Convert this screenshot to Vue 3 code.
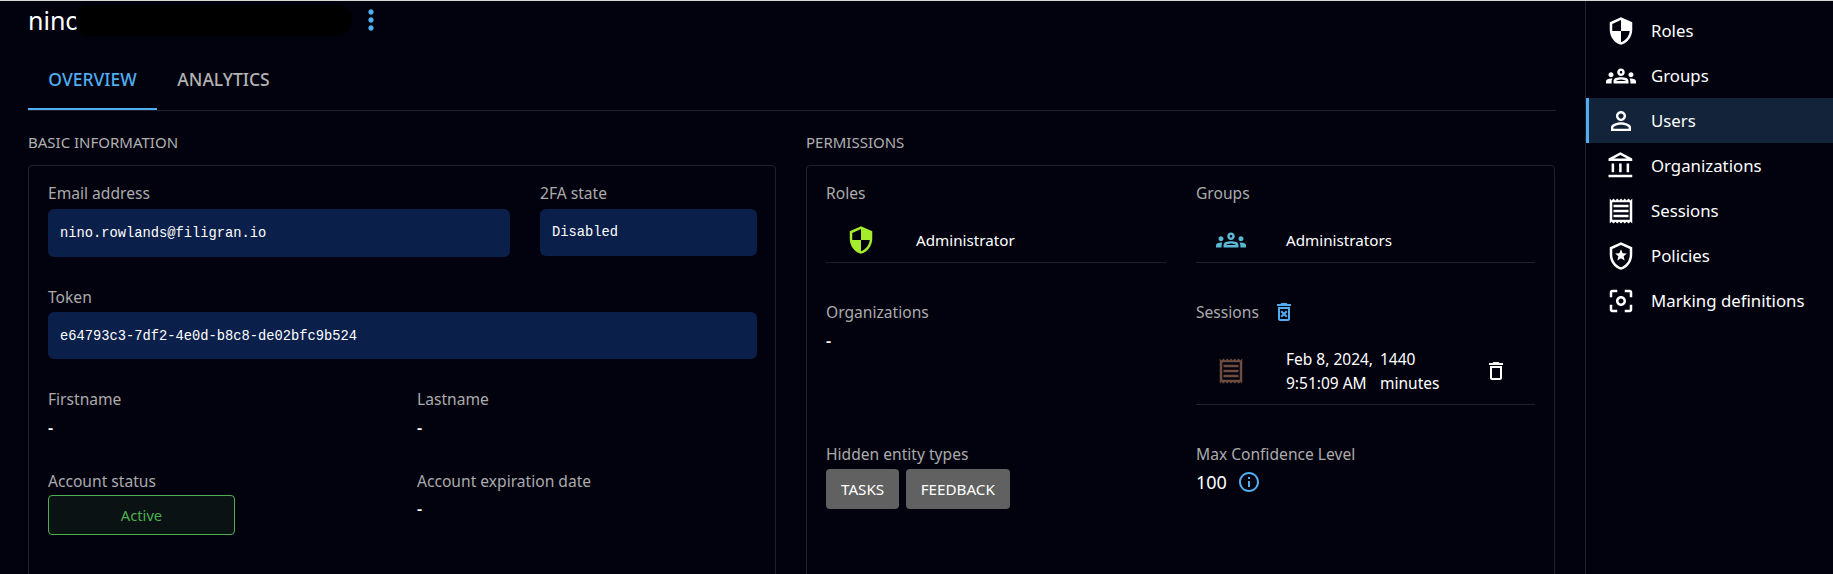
<template>
  <div class="page">
    <main class="main">
      <header class="title-row">
        <h1 class="title">nino.rowlands@filigran.io</h1>
        <div class="redaction"></div>
        <svg class="kebab" viewBox="0 0 24 24"><path :d="icons.more" /></svg>
      </header>

      <nav class="tabs">
        <span class="tab active">Overview</span>
        <span class="tab">Analytics</span>
      </nav>

      <div class="columns">
        <!-- Basic information -->
        <section class="column">
          <h2 class="section-title">Basic information</h2>
          <div class="card">
            <div class="basic-top">
              <div class="field">
                <div class="label">Email address</div>
                <pre class="code code-email">nino.rowlands@filigran.io</pre>
              </div>
              <div class="field">
                <div class="label">2FA state</div>
                <pre class="code code-state">Disabled</pre>
              </div>
            </div>
            <div class="field token">
              <div class="label">Token</div>
              <pre class="code code-token">e64793c3-7df2-4e0d-b8c8-de02bfc9b524</pre>
            </div>
            <div class="pair names">
              <div>
                <div class="label">Firstname</div>
                <div class="value">-</div>
              </div>
              <div>
                <div class="label">Lastname</div>
                <div class="value">-</div>
              </div>
            </div>
            <div class="pair status">
              <div>
                <div class="label">Account status</div>
                <div class="status-tag">Active</div>
              </div>
              <div>
                <div class="label">Account expiration date</div>
                <div class="value expiry">-</div>
              </div>
            </div>
          </div>
        </section>

        <!-- Permissions -->
        <section class="column">
          <h2 class="section-title">Permissions</h2>
          <div class="card">
            <div class="perm-grid">
              <div>
                <div class="label">Roles</div>
                <div class="list-row">
                  <span class="list-icon"><svg class="icon large lime" viewBox="0 0 24 24"><path :d="icons.security" /></svg></span>
                  <span class="list-text">Administrator</span>
                </div>
              </div>
              <div>
                <div class="label">Groups</div>
                <div class="list-row">
                  <span class="list-icon"><svg class="icon large teal" viewBox="0 0 24 24"><path :d="icons.groups" /></svg></span>
                  <span class="list-text">Administrators</span>
                </div>
              </div>
              <div class="perm-mid">
                <div class="label">Organizations</div>
                <div class="value">-</div>
              </div>
              <div class="perm-mid">
                <div class="label label-with-icon">
                  Sessions
                  <svg class="icon blue" viewBox="0 0 24 24"><path :d="icons.deleteForever" /></svg>
                </div>
                <div class="list-row session-row">
                  <span class="list-icon"><svg class="icon large brown" viewBox="0 0 24 24"><path :d="icons.receipt" /></svg></span>
                  <span class="session-date">Feb 8, 2024,<br />9:51:09 AM</span>
                  <span class="session-time">1440<br />minutes</span>
                  <svg class="icon session-delete" viewBox="0 0 24 24"><path :d="icons.trash" /></svg>
                </div>
              </div>
              <div class="perm-bottom">
                <div class="label">Hidden entity types</div>
                <div class="chips">
                  <span class="chip">TASKS</span>
                  <span class="chip">FEEDBACK</span>
                </div>
              </div>
              <div class="perm-bottom">
                <div class="label">Max Confidence Level</div>
                <div class="confidence">
                  <span>100</span>
                  <svg class="icon blue" viewBox="0 0 24 24"><path :d="icons.info" /></svg>
                </div>
              </div>
            </div>
          </div>
        </section>
      </div>
    </main>

    <aside class="sidebar">
      <a v-for="item in menu" :key="item.label" class="menu-item" :class="{ selected: item.selected }">
        <svg class="icon large menu-icon" viewBox="0 0 24 24"><path :d="item.icon" /></svg>
        <span>{{ item.label }}</span>
      </a>
    </aside>
  </div>
</template>

<script setup>
const icons = {
  more: 'M12 8c1.1 0 2-.9 2-2s-.9-2-2-2-2 .9-2 2 .9 2 2 2zm0 2c-1.1 0-2 .9-2 2s.9 2 2 2 2-.9 2-2-.9-2-2-2zm0 6c-1.1 0-2 .9-2 2s.9 2 2 2 2-.9 2-2-.9-2-2-2z',
  security: 'M12 1 3 5v6c0 5.55 3.84 10.74 9 12 5.16-1.26 9-6.45 9-12V5l-9-4zm0 10.99h7c-.53 4.12-3.28 7.79-7 8.94V12H5V6.3l7-3.11v8.8z',
  groups: 'M4 13c1.1 0 2-.9 2-2s-.9-2-2-2-2 .9-2 2 .9 2 2 2zm1.13 1.1c-.37-.06-.74-.1-1.13-.1-.99 0-1.93.21-2.78.58C.48 14.9 0 15.62 0 16.43V18h4.5v-1.61c0-.83.23-1.61.63-2.29zM20 13c1.1 0 2-.9 2-2s-.9-2-2-2-2 .9-2 2 .9 2 2 2zm4 3.43c0-.81-.48-1.53-1.22-1.85-.85-.37-1.79-.58-2.78-.58-.39 0-.76.04-1.13.1.4.68.63 1.46.63 2.29V18H24v-1.57zm-7.76-2.78C15.07 13.14 13.62 13 12 13c-1.62 0-3.07.15-4.24.65C6.68 14.13 6 15.21 6 16.39V18h12v-1.61c0-1.18-.68-2.26-1.76-2.74zM8.07 16c.09-.23.13-.39.91-.69.97-.38 1.99-.56 3.02-.56s2.05.18 3.02.56c.77.3.81.46.91.69H8.07zM12 8c.55 0 1 .45 1 1s-.45 1-1 1-1-.45-1-1 .45-1 1-1m0-2c-1.66 0-3 1.34-3 3s1.34 3 3 3 3-1.34 3-3-1.34-3-3-3z',
  person: 'M12 5.9c1.16 0 2.1.94 2.1 2.1s-.94 2.1-2.1 2.1S9.9 9.16 9.9 8s.94-2.1 2.1-2.1m0 9c2.97 0 6.1 1.46 6.1 2.1v1.1H5.9V17c0-.64 3.13-2.1 6.1-2.1M12 4C9.79 4 8 5.79 8 8s1.79 4 4 4 4-1.79 4-4-1.79-4-4-4zm0 9c-2.67 0-8 1.34-8 4v3h16v-3c0-2.66-5.33-4-8-4z',
  bank: 'M6.5 10h-2v7h2v-7zm6 0h-2v7h2v-7zm8.5 9H2v2h19v-2zm-2.5-9h-2v7h2v-7zm-7-6.74L16.71 6H6.29l5.21-2.74m0-2.26L2 6v2h19V6l-9.5-5z',
  receipt: 'M19.5 3.5 18 2l-1.5 1.5L15 2l-1.5 1.5L12 2l-1.5 1.5L9 2 7.5 3.5 6 2 4.5 3.5 3 2v20l1.5-1.5L6 22l1.5-1.5L9 22l1.5-1.5L12 22l1.5-1.5L15 22l1.5-1.5L18 22l1.5-1.5L21 22V2l-1.5 1.5zM19 19.09H5V4.91h14v14.18zM6 15h12v2H6zm0-4h12v2H6zm0-4h12v2H6z',
  police: 'M12 1 3 5v6c0 5.55 3.84 10.74 9 12 5.16-1.26 9-6.45 9-12V5l-9-4zm7 10c0 4.52-2.98 8.69-7 9.93-4.02-1.24-7-5.41-7-9.93V6.3l7-3.11 7 3.11V11zM12 6.6l1.3 3.1 3.4.3-2.6 2.2.8 3.3-2.9-1.8-2.9 1.8.8-3.3-2.6-2.2 3.4-.3z',
  focus: 'M12 8c-2.21 0-4 1.79-4 4s1.79 4 4 4 4-1.79 4-4-1.79-4-4-4zm0 6c-1.1 0-2-.9-2-2s.9-2 2-2 2 .9 2 2-.9 2-2 2zM5 15H3v4c0 1.1.9 2 2 2h4v-2H5v-4zM5 5h4V3H5c-1.1 0-2 .9-2 2v4h2V5zm14-2h-4v2h4v4h2V5c0-1.1-.9-2-2-2zm0 16h-4v2h4c1.1 0 2-.9 2-2v-4h-2v4z',
  trash: 'M16 9v10H8V9h8m-1.5-6h-5l-1 1H5v2h14V4h-3.5l-1-1zM18 7H6v12c0 1.1.9 2 2 2h8c1.1 0 2-.9 2-2V7z',
  deleteForever: 'M14.12 10.47 12 12.59l-2.13-2.12-1.41 1.41L10.59 14l-2.12 2.12 1.41 1.41L12 15.41l2.12 2.12 1.41-1.41L13.41 14l2.12-2.12zM15.5 4l-1-1h-5l-1 1H5v2h14V4zM6 19c0 1.1.9 2 2 2h8c1.1 0 2-.9 2-2V7H6v12zM8 9h8v10H8V9z',
  info: 'M11 7h2v2h-2zm0 4h2v6h-2zm1-9C6.48 2 2 6.48 2 12s4.48 10 10 10 10-4.48 10-10S17.52 2 12 2zm0 18c-4.41 0-8-3.59-8-8s3.59-8 8-8 8 3.59 8 8-3.59 8-8 8z',
}

const menu = [
  { label: 'Roles', icon: icons.security },
  { label: 'Groups', icon: icons.groups },
  { label: 'Users', icon: icons.person, selected: true },
  { label: 'Organizations', icon: icons.bank },
  { label: 'Sessions', icon: icons.receipt },
  { label: 'Policies', icon: icons.police },
  { label: 'Marking definitions', icon: icons.focus },
]
</script>

<style>
html,
body {
  margin: 0;
  background: #02020f;
  overflow: hidden;
}
</style>

<style scoped>
.page {
  display: flex;
  height: 574px;
  box-sizing: border-box;
  border-top: 1px solid #d8d8d8;
  background: #02020f;
  color: #fff;
  font-family: 'Noto Sans', 'Open Sans', sans-serif;
  font-size: 15px;
  overflow: hidden;
}

.icon {
  display: block;
  width: 24px;
  height: 24px;
  fill: currentColor;
  flex: none;
}

.icon.large {
  width: 30px;
  height: 30px;
}

.lime { color: #a5ec2f; }
.teal { color: #5bb8d4; }
.brown { color: #6e4c40; }
.blue { color: #4fadf0; }

/* Main column */
.main {
  flex: none;
  width: 1585px;
  padding: 0 29px 0 28px;
  box-sizing: border-box;
}

.title-row {
  position: relative;
  display: flex;
  align-items: center;
  height: 38px;
}

.title {
  margin: 0;
  width: 327px;
  font-size: 25px;
  font-weight: 400;
  white-space: nowrap;
  overflow: hidden;
}

/* blacked out part of the address */
.redaction {
  position: absolute;
  left: 48px;
  top: 4px;
  width: 276px;
  height: 31px;
  background: #000;
  border-radius: 12px 16px 16px 12px;
}

.kebab {
  width: 32px;
  height: 32px;
  fill: #4fadf0;
  flex: none;
}

.tabs {
  display: flex;
  height: 72px;
  box-sizing: border-box;
  border-bottom: 1px solid #1e2030;
}

.tab {
  display: flex;
  align-items: center;
  justify-content: center;
  width: 129px;
  height: 71px;
  box-sizing: border-box;
  padding-top: 8px;
  color: #b3b3b3;
  font-size: 17.5px;
  font-weight: 500;
  text-transform: uppercase;
}

.tab + .tab {
  margin-left: 2px;
}

.tab.active {
  color: #4fadf0;
  box-shadow: inset 0 -2px 0 #4fadf0;
}

.columns {
  display: grid;
  grid-template-columns: 748px 749px;
  column-gap: 30px;
  margin-top: 22px;
}

.section-title {
  margin: 0;
  height: 32px;
  color: #b0b0b0;
  font-size: 15px;
  font-weight: 400;
  line-height: 18px;
  text-transform: uppercase;
}

.card {
  height: 500px;
  box-sizing: border-box;
  padding: 19px 18px 19px 19px;
  border: 1px solid #1e2030;
  border-radius: 4px;
}

.label {
  color: #ababab;
  font-size: 15.6px;
  line-height: 16px;
  white-space: nowrap;
}

.value {
  margin-top: 11px;
  font-size: 16px;
  font-weight: 600;
  line-height: 20px;
}

/* Basic information */
.basic-top {
  display: grid;
  grid-template-columns: 462px 217px;
  column-gap: 30px;
  align-items: start;
}

.code {
  margin: 8px 0 0;
  padding: 0 12px;
  border-radius: 6px;
  background: #0b1f4b;
  color: #fff;
  font-family: 'Liberation Mono', 'DejaVu Sans Mono', monospace;
  font-size: 13.75px;
  line-height: 50px;
}

.code-email {
  height: 48px;
}

.code-state {
  height: 47px;
  line-height: 48px;
}

.code-token {
  height: 47px;
  margin-top: 7px;
}

.token {
  margin-top: 32px;
}

.pair {
  display: grid;
  grid-template-columns: 369px 1fr;
}

.names {
  margin-top: 32px;
}

.status {
  margin-top: 35px;
}

.status-tag {
  display: flex;
  align-items: center;
  justify-content: center;
  width: 187px;
  height: 40px;
  margin-top: 6px;
  box-sizing: border-box;
  border: 1px solid #4caf50;
  border-radius: 4px;
  background: #0a1214;
  color: #4caf50;
  font-size: 14.7px;
}

.value.expiry {
  margin-top: 10px;
}

/* Permissions */
.perm-grid {
  display: grid;
  grid-template-columns: 340px 339px;
  column-gap: 30px;
}

.list-row {
  display: flex;
  align-items: center;
  height: 44px;
  margin-top: 17px;
  border-bottom: 1px solid #1e2030;
}

.list-icon {
  display: flex;
  justify-content: center;
  width: 70px;
  margin-right: 20px;
  flex: none;
}

.list-text {
  font-size: 15.2px;
}

.perm-mid {
  margin-top: 41px;
}

.label-with-icon {
  display: flex;
  align-items: center;
  gap: 13px;
  height: 16px;
}

.session-row {
  height: 67px;
  font-size: 15.5px;
  line-height: 24px;
}

.session-date {
  width: 94px;
  flex: none;
  white-space: nowrap;
}

.session-time {
  flex: 1;
}

.session-delete {
  margin-right: 27px;
}

.perm-bottom {
  margin-top: 41px;
}

.chips {
  display: flex;
  gap: 6.5px;
  margin-top: 7px;
}

.chip {
  display: flex;
  align-items: center;
  height: 40px;
  padding: 0 15px;
  border-radius: 4px;
  background: #616161;
  font-size: 15.2px;
}

.confidence {
  display: flex;
  align-items: center;
  gap: 10px;
  height: 28px;
  margin-top: 6px;
  font-size: 18px;
}

/* Right menu */
.sidebar {
  flex: 1;
  padding-top: 7px;
  border-left: 1px solid #1e2030;
}

.menu-item {
  display: flex;
  align-items: center;
  height: 45px;
  padding-left: 20px;
  color: #fff;
  font-size: 16.8px;
}

.menu-item.selected {
  padding-left: 17px;
  border-left: 3px solid #4fadf0;
  background: #12233a;
}

.menu-icon {
  margin-right: 15px;
}
</style>
